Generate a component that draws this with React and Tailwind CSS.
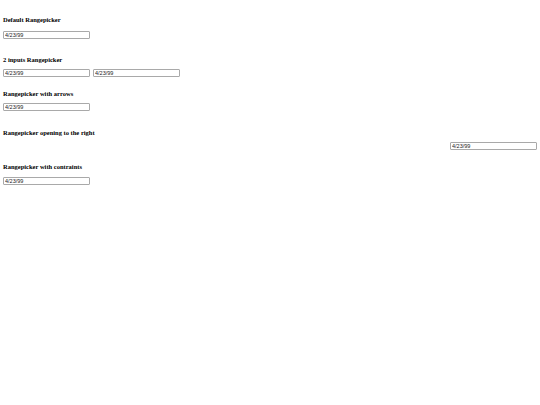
export default function App() {
  const h = "text-[6.5px] leading-[8px] font-bold text-black [font-family:'Liberation_Serif',serif] m-0";
  const inp = "block w-[87px] h-[8px] border border-[#a9a9a9] rounded-[1px] px-[1px] text-[5.5px] leading-[6px] text-[#222] [font-family:'Liberation_Sans',Arial,sans-serif] bg-white";
  const Input = ({ cls = "" }) => (
    <input readOnly value="4/23/99" className={inp + " " + cls} />
  );
  return (
    <div className="w-[540px] h-[405px] bg-white pl-[3px] pr-[3px] pt-[16px]">
      <h4 className={h}>Default Rangepicker</h4>
      <div className="mt-[7px]"><Input /></div>
      <h4 className={h + " mt-[17px]"}>2 inputs Rangepicker</h4>
      <div className="mt-[5px] flex gap-[3px]"><Input /><Input /></div>
      <h4 className={h + " mt-[13px]"}>Rangepicker with arrows</h4>
      <div className="mt-[5px]"><Input /></div>
      <h4 className={h + " mt-[18px]"}>Rangepicker opening to the right</h4>
      <div className="mt-[5px] flex justify-end"><Input /></div>
      <h4 className={h + " mt-[13px]"}>Rangepicker with contraints</h4>
      <div className="mt-[6px]"><Input /></div>
    </div>
  );
}
